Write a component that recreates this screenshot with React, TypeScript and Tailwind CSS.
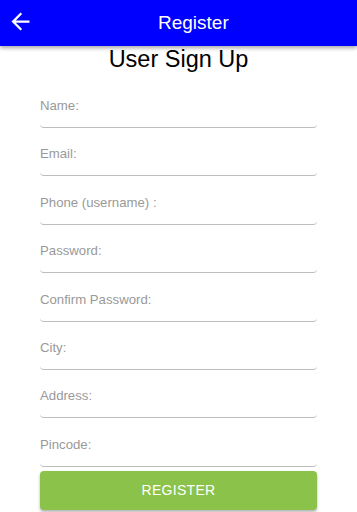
import React from "react";

const fields = [
  "Name:",
  "Email:",
  "Phone (username) :",
  "Password:",
  "Confirm Password:",
  "City:",
  "Address:",
  "Pincode:",
];

export default function App() {
  return (
    <div className="w-[357px] h-[512px] bg-white overflow-hidden" style={{ fontFamily: '"Liberation Sans", Arial, sans-serif' }}>
      <div className="relative z-10 h-[46px] bg-[#0000ff] flex items-center shadow-[0_2px_4px_rgba(0,0,0,0.35)]">
        <svg width="27" height="27" viewBox="0 0 24 24" className="ml-[7px] -mt-[3px]" fill="#ffffff">
          <path d="M20 11H7.83l5.59-5.59L12 4l-8 8 8 8 1.41-1.41L7.83 13H20v-2z" />
        </svg>
        <div className="ml-[124px] text-white text-[19px] leading-[24px]">Register</div>
      </div>
      <div className="text-center text-black text-[23.5px] leading-[28px] -mt-[1px]">User Sign Up</div>
      <div className="px-10 pt-[25px] flex flex-col">
        {fields.map((f, i) => (
          <div key={f} className={i === 0 ? "" : "mt-[18.4px]"}>
            <div className="text-[13.2px] leading-[16px] text-[#999999]">{f}</div>
            <div className="h-[14px] border-b border-[#bdbdbd] rounded-[4px]" />
          </div>
        ))}
        <button className="mt-[4px] h-[39px] rounded-[4px] bg-[#8bc34a] text-white text-[14px] tracking-[0.3px] shadow-[0_2px_3px_rgba(0,0,0,0.3)]">
          REGISTER
        </button>
      </div>
    </div>
  );
}
